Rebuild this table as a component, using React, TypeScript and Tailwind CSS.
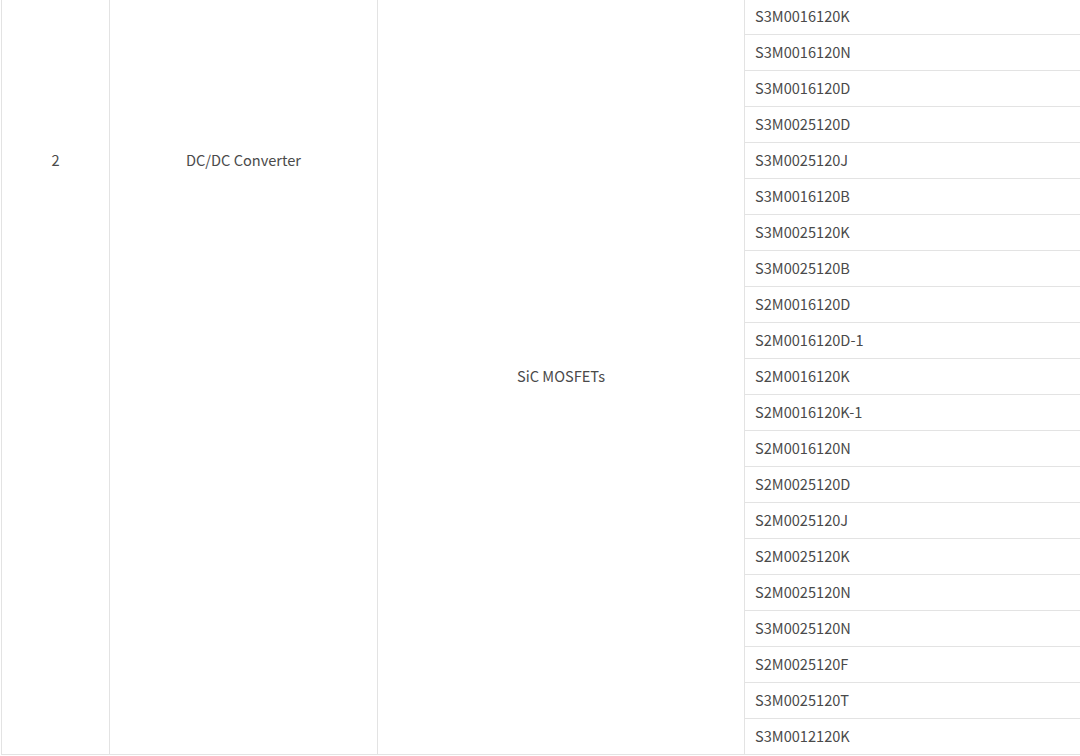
const parts = [
  "S3M0016120K",
  "S3M0016120N",
  "S3M0016120D",
  "S3M0025120D",
  "S3M0025120J",
  "S3M0016120B",
  "S3M0025120K",
  "S3M0025120B",
  "S2M0016120D",
  "S2M0016120D-1",
  "S2M0016120K",
  "S2M0016120K-1",
  "S2M0016120N",
  "S2M0025120D",
  "S2M0025120J",
  "S2M0025120K",
  "S2M0025120N",
  "S3M0025120N",
  "S2M0025120F",
  "S3M0025120T",
  "S3M0012120K",
];

export default function App() {
  return (
    <main
      className="min-h-screen bg-white overflow-hidden pl-px"
      style={{ fontFamily: '"Noto Sans CJK SC", "Noto Sans", sans-serif' }}
    >
      <table className="-mt-[2px] w-[1079px] border-collapse text-[14.6px] leading-[20px] text-[#4a4a4a] table-fixed">
        <colgroup>
          <col className="w-[108px]" />
          <col className="w-[268px]" />
          <col className="w-[367px]" />
          <col className="w-[336px]" />
        </colgroup>
        <tbody>
          {parts.map((p, i) => (
            <tr key={p} className="h-[36px]">
              {i === 0 && (
                <>
                  <td rowSpan={parts.length} className="border border-[#e3e3e3] text-center align-top pt-[151px]">
                    2
                  </td>
                  <td rowSpan={parts.length} className="border border-[#e3e3e3] text-center align-top pt-[151px]">
                    DC/DC Converter
                  </td>
                  <td rowSpan={parts.length} className="border border-[#e3e3e3] text-center align-middle pb-[2px]">
                    SiC MOSFETs
                  </td>
                </>
              )}
              <td className="border border-[#e3e3e3] px-[10px] pt-0 pb-[2px] align-middle">{p}</td>
            </tr>
          ))}
        </tbody>
      </table>
    </main>
  );
}
